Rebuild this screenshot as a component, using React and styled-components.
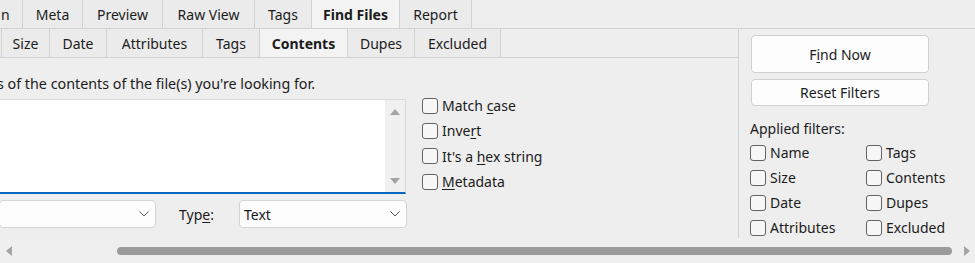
import React from "react"
import styled, { createGlobalStyle } from "styled-components"

const GlobalStyle = createGlobalStyle`
  html, body {
    margin: 0;
    padding: 0;
    background: #eeeeee;
  }
  body {
    font-family: "Noto Sans", "Open Sans", sans-serif;
    font-size: 14px;
    color: #1b1b1b;
  }
`

const Window = styled.div`
  width: 975px;
  height: 263px;
  overflow: hidden;
  display: flex;
  flex-direction: column;
  background: #eeeeee;
`

const TopStrip = styled.div`
  display: flex;
  height: 29px;
  box-sizing: border-box;
  border-bottom: 1px solid #d2d2d2;
  flex-shrink: 0;
`

const Tab = styled.div`
  box-sizing: border-box;
  width: ${({ $w }) => $w}px;
  flex-shrink: 0;
  height: 100%;
  display: flex;
  align-items: center;
  justify-content: ${({ $clip }) => ($clip ? "flex-start" : "center")};
  padding-left: ${({ $clip }) => ($clip ? "1px" : "0")};
  border-right: 1px solid #d2d2d2;
  background: ${({ $active }) => ($active ? "#f3f3f3" : "#ebebeb")};
  font-weight: ${({ $active }) => ($active ? 700 : 400)};
  white-space: nowrap;
  overflow: hidden;
`

const StripFill = styled.div`
  flex: 1;
`

const Body = styled.div`
  display: flex;
  height: 209px;
  flex-shrink: 0;
`

const LeftPane = styled.div`
  width: 739px;
  box-sizing: border-box;
  border-right: 1px solid #d2d2d2;
  display: flex;
  flex-direction: column;
`

const SubStrip = styled(TopStrip)`
  height: 29px;
`

const Content = styled.div`
  display: flex;
  flex-direction: column;
  padding-top: 16px;
`

const Hint = styled.div`
  line-height: 20px;
  height: 20px;
  margin-left: -3px;
  font-size: 14.3px;
  white-space: nowrap;
`

const EditRow = styled.div`
  display: flex;
  align-items: flex-start;
  margin-top: 5px;
`

const TextBox = styled.div`
  box-sizing: border-box;
  width: 407px;
  height: 95px;
  margin-left: -1px;
  background: #ffffff;
  border: 1px solid #dadada;
  border-bottom: 2px solid #0067c0;
  display: flex;
  justify-content: flex-end;
`

const VScroll = styled.div`
  width: 20px;
  background: #f0f0f0;
  display: flex;
  flex-direction: column;
  justify-content: space-between;
  align-items: center;
  padding: 9px 0 8px;
`

const Options = styled.div`
  margin-left: 16px;
  margin-top: -6px;
  display: flex;
  flex-direction: column;
`

const CheckRow = styled.label`
  display: flex;
  align-items: center;
  height: ${({ $h }) => $h || 25}px;
  white-space: nowrap;
`

const Box = styled.span`
  box-sizing: border-box;
  width: 16px;
  height: 16px;
  border: 1px solid #636363;
  border-radius: 3px;
  background: #f7f7f7;
  margin-right: 4px;
  flex-shrink: 0;
`

const Key = styled.u`
  text-decoration: underline;
  text-underline-offset: 2px;
  text-decoration-thickness: 1px;
`

const ComboRow = styled.div`
  display: flex;
  align-items: center;
  margin-top: 6px;
`

const Combo = styled.div`
  box-sizing: border-box;
  width: ${({ $w }) => $w}px;
  height: 28px;
  margin-left: ${({ $ml }) => $ml || 0}px;
  background: #fdfdfd;
  border: 1px solid #d3d3d3;
  border-radius: 4px;
  display: flex;
  align-items: center;
  padding: 0 6px 0 4px;
`

const ComboText = styled.span`
  flex: 1;
`

const FieldLabel = styled.span`
  margin-left: 23px;
  width: 37px;
`

const RightPane = styled.div`
  flex: 1;
  padding: 6px 0 0 12px;
  display: flex;
  flex-direction: column;
  & > * {
    flex-shrink: 0;
  }
`

const Button = styled.div`
  box-sizing: border-box;
  width: 178px;
  height: ${({ $h }) => $h}px;
  margin-bottom: 6px;
  background: #fdfdfd;
  border: 1px solid #d0d0d0;
  border-radius: 4px;
  display: flex;
  align-items: center;
  justify-content: center;
`

const Caption = styled.div`
  margin-top: 7px;
  margin-left: -1px;
  line-height: 20px;
`

const FilterGrid = styled.div`
  display: grid;
  grid-template-columns: 116px 100px;
  grid-auto-rows: 25px;
  margin-top: 1px;
  margin-left: -1px;
`

const HScroll = styled.div`
  flex: 1;
  display: flex;
  align-items: center;
  background: #efefef;
`

const ArrowCell = styled.div`
  width: 17px;
  display: flex;
  justify-content: center;
  flex-shrink: 0;
`

const Track = styled.div`
  flex: 1;
  display: flex;
  align-items: center;
`

const Thumb = styled.div`
  height: 8px;
  border-radius: 4px;
  background: #9b9b9b;
  margin-left: 100px;
  width: 835px;
`

const Tri = ({ dir }) => {
  const pts = {
    up: "0,6 5,0 10,6",
    down: "0,0 10,0 5,6",
    left: "6,0 6,10 0,5",
    right: "0,0 0,10 6,5",
  }[dir]
  const horiz = dir === "left" || dir === "right"
  return (
    <svg width={horiz ? 6 : 10} height={horiz ? 10 : 6} viewBox={horiz ? "0 0 6 10" : "0 0 10 6"}>
      <polygon points={pts} fill="#a3a3a3" />
    </svg>
  )
}

const Chevron = () => (
  <svg width="10" height="6" viewBox="0 0 10 6">
    <polyline points="0.5,0.5 5,5 9.5,0.5" fill="none" stroke="#5a5a5a" strokeWidth="1" />
  </svg>
)

const Check = ({ children, h }) => (
  <CheckRow $h={h}>
    <Box />
    <span>{children}</span>
  </CheckRow>
)

const topTabs = [
  ["n", 23],
  ["Meta", 60],
  ["Preview", 80],
  ["Raw View", 92],
  ["Tags", 57],
  ["Find Files", 88, true],
  ["Report", 72],
]

const subTabs = [
  ["", 2],
  ["Size", 48],
  ["Date", 57],
  ["Attributes", 96],
  ["Tags", 57],
  ["Contents", 88, true],
  ["Dupes", 67],
  ["Excluded", 86],
]

const filters = ["Name", "Tags", "Size", "Contents", "Date", "Dupes", "Attributes", "Excluded"]

export default function App() {
  return (
    <>
      <GlobalStyle />
      <Window>
        <TopStrip>
          {topTabs.map(([label, w, active], i) => (
            <Tab key={i} $w={w} $active={active} $clip={i === 0}>
              {label}
            </Tab>
          ))}
          <StripFill />
        </TopStrip>
        <Body>
          <LeftPane>
            <SubStrip>
              {subTabs.map(([label, w, active], i) => (
                <Tab key={i} $w={w} $active={active}>
                  {label}
                </Tab>
              ))}
              <StripFill />
            </SubStrip>
            <Content>
              <Hint>s of the contents of the file(s) you're looking for.</Hint>
              <EditRow>
                <TextBox>
                  <VScroll>
                    <Tri dir="up" />
                    <Tri dir="down" />
                  </VScroll>
                </TextBox>
                <Options>
                  <Check>
                    Match <Key>c</Key>ase
                  </Check>
                  <Check>
                    Inve<Key>r</Key>t
                  </Check>
                  <Check h={26}>
                    It's a <Key>h</Key>ex string
                  </Check>
                  <Check>
                    <Key>M</Key>etadata
                  </Check>
                </Options>
              </EditRow>
              <ComboRow>
                <Combo $w={157} $ml={-1}>
                  <ComboText />
                  <Chevron />
                </Combo>
                <FieldLabel>
                  Typ<Key>e</Key>:
                </FieldLabel>
                <Combo $w={168} $ml={23}>
                  <ComboText>Text</ComboText>
                  <Chevron />
                </Combo>
              </ComboRow>
            </Content>
          </LeftPane>
          <RightPane>
            <Button $h={38}>
              <span>
                F<Key>i</Key>nd Now
              </span>
            </Button>
            <Button $h={27}>Reset Filters</Button>
            <Caption>Applied filters:</Caption>
            <FilterGrid>
              {filters.map((f) => (
                <Check key={f}>{f}</Check>
              ))}
            </FilterGrid>
          </RightPane>
        </Body>
        <HScroll>
          <ArrowCell>
            <Tri dir="left" />
          </ArrowCell>
          <Track>
            <Thumb />
          </Track>
          <ArrowCell>
            <Tri dir="right" />
          </ArrowCell>
        </HScroll>
      </Window>
    </>
  )
}
